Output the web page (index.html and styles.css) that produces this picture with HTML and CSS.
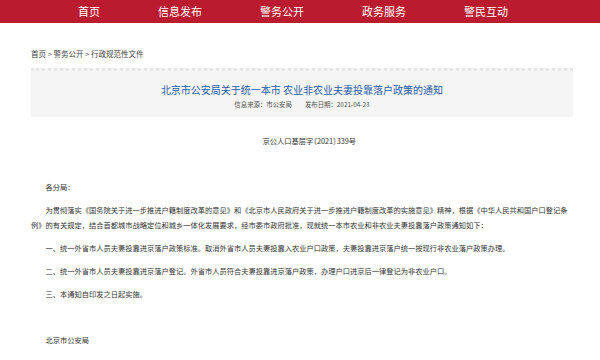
FILE: index.html
```html
<!DOCTYPE html>
<html lang="zh-CN">
<head>
<meta charset="utf-8">
<title>北京市公安局关于统一本市 农业非农业夫妻投靠落户政策的通知</title>
<link rel="stylesheet" href="styles.css">
</head>
<body>
<nav class="nav">
  <a class="nav-item">首页</a>
  <a class="nav-item">信息发布</a>
  <a class="nav-item">警务公开</a>
  <a class="nav-item">政务服务</a>
  <a class="nav-item">警民互动</a>
</nav>
<main class="wrap">
  <div class="crumbs">首页 <span class="sep">&gt;</span> 警务公开 <span class="sep">&gt;</span> 行政规范性文件</div>
  <header class="head">
    <h1 class="title">北京市公安局关于统一本市 农业非农业夫妻投靠落户政策的通知</h1>
    <div class="meta"><span>信息来源：市公安局</span><span>发布日期：2021-04-23</span></div>
  </header>
  <article class="body">
    <p class="center">京公人口基层字〔2021〕339号</p>
    <p class="blank">&nbsp;</p>
    <p>各分局：</p>
    <p>为贯彻落实《国务院关于进一步推进户籍制度改革的意见》和《北京市人民政府关于进一步推进户籍制度改革的实施意见》精神，根据《中华人民共和国户口登记条例》的有关规定，结合首都城市战略定位和城乡一体化发展要求，经市委市政府批准，现就统一本市农业和非农业夫妻投靠落户政策通知如下：</p>
    <p>一、统一外省市人员夫妻投靠进京落户政策标准。取消外省市人员夫妻投靠入农业户口政策，夫妻投靠进京落户统一按现行非农业落户政策办理。</p>
    <p>二、统一外省市人员夫妻投靠进京落户登记。外省市人员符合夫妻投靠进京落户政策，办理户口进京后一律登记为非农业户口。</p>
    <p>三、本通知自印发之日起实施。</p>
    <p class="blank">&nbsp;</p>
    <p>北京市公安局</p>
  </article>
</main>
</body>
</html>
```
FILE: styles.css
```css
html, body {
  margin: 0;
  padding: 0;
  background: #fff;
}
body {
  font-family: "Microsoft YaHei", "Noto Sans CJK SC", "Noto Sans", sans-serif;
  color: #333;
}
.nav {
  height: 23px;
  background: #bb1b2f;
  display: flex;
  align-items: center;
  gap: 58px;
  padding-left: 78px;
  box-sizing: border-box;
}
.nav-item {
  color: #fff;
  font-size: 11px;
  line-height: 23px;
  text-decoration: none;
}
.wrap {
  width: 542px;
  margin-left: 31px;
}
.crumbs {
  margin-top: 26px;
  font-size: 7.5px;
  line-height: 10px;
  color: #444;
}
.sep {
  color: #666;
}
.head {
  margin-top: 9px;
  background: #f5f5f5;
  border-top: 3px dotted #e6e6e6;
  padding: 12px 0 7px;
  text-align: center;
}
.title {
  margin: 0;
  font-size: 10px;
  line-height: 14px;
  font-weight: normal;
  color: #2c5aa6;
}
.meta {
  margin-top: 3px;
  font-size: 6.4px;
  line-height: 10px;
  color: #555;
  display: flex;
  justify-content: center;
  gap: 13px;
}
.body {
  margin-top: 17px;
  font-size: 7.25px;
  line-height: 15px;
  color: #333;
}
.body p {
  margin: 0 0 8px;
  text-indent: 2em;
}
.body .center {
  text-align: center;
  font-feature-settings: "halt";
}
```
